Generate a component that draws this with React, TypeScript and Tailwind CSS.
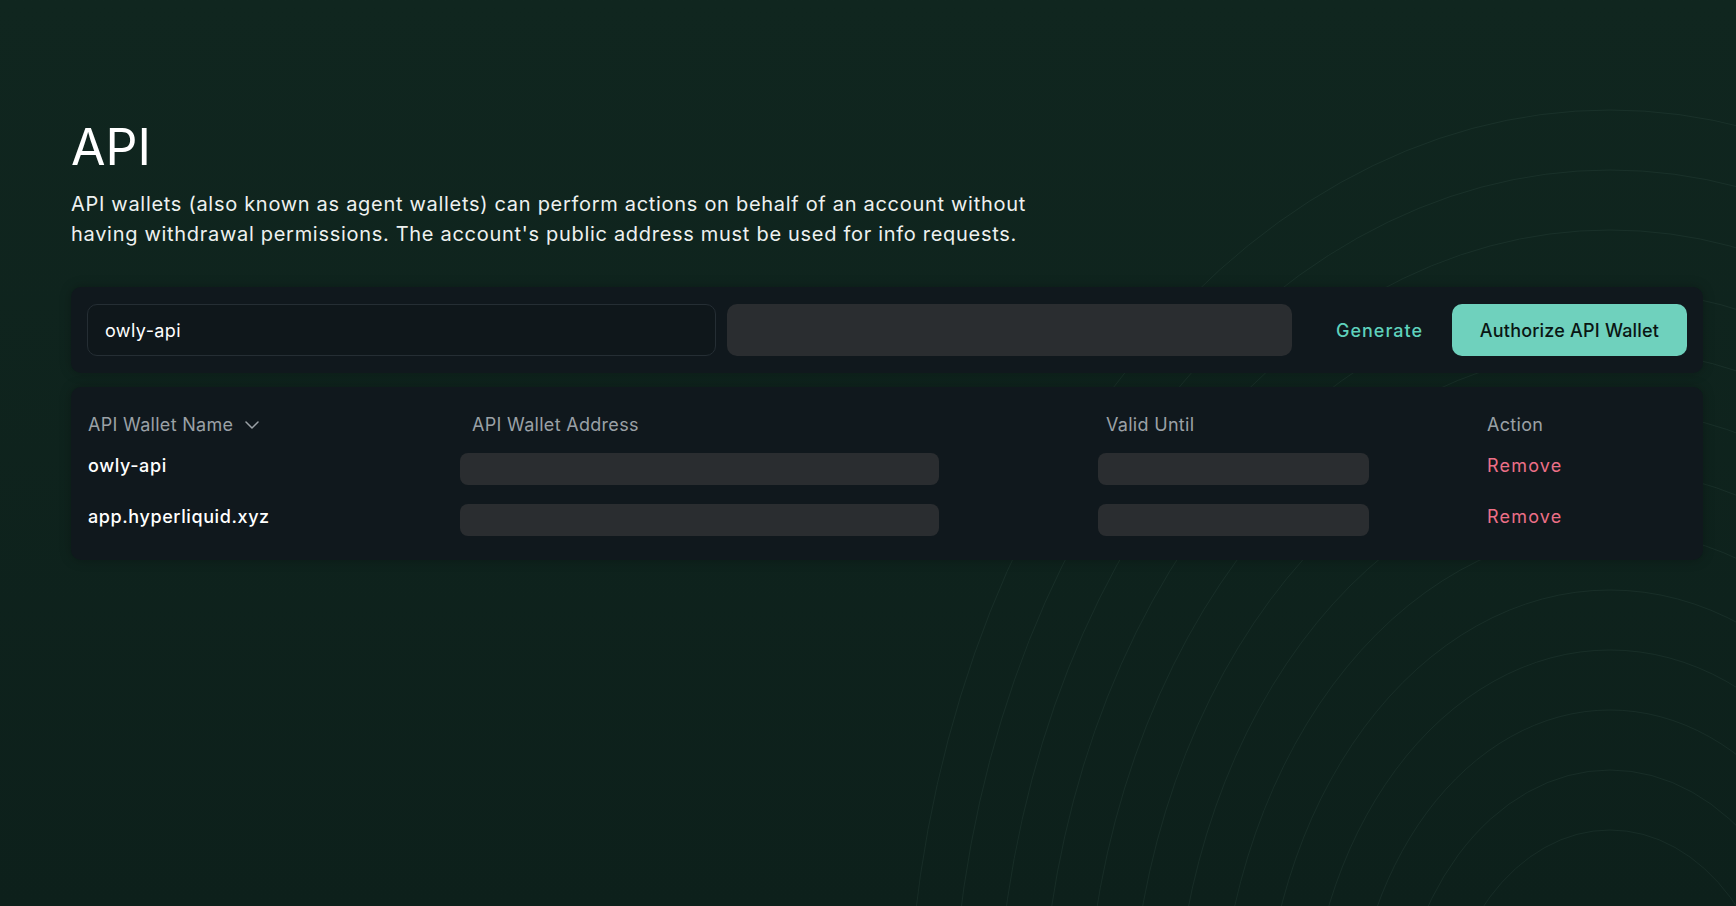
import React from "react";

const arcs = Array.from({ length: 13 }, (_, i) => 230 + i * 60);

function Background() {
  return (
    <svg
      className="pointer-events-none absolute inset-0 h-full w-full"
      viewBox="0 0 1736 906"
      preserveAspectRatio="none"
    >
      {arcs.map((ry) => (
        <ellipse
          key={ry}
          cx={1610}
          cy={1060}
          rx={ry * 0.74}
          ry={ry}
          fill="none"
          stroke="rgba(190,230,215,0.06)"
          strokeWidth={1}
        />
      ))}
    </svg>
  );
}

function Chevron() {
  return (
    <svg width="14" height="8" viewBox="0 0 14 8" className="ml-[12px] mt-[2px]">
      <polyline points="1,1 7,7 13,1" fill="none" stroke="#9ba1a6" strokeWidth="1.5" strokeLinecap="round" strokeLinejoin="round" />
    </svg>
  );
}

const rows = ["owly-api", "app.hyperliquid.xyz"];

export default function App() {
  return (
    <div
      className="relative min-h-screen w-full overflow-hidden bg-gradient-to-b from-[#10261f] to-[#0d201b] text-white"
      style={{ fontFamily: "Inter, 'Noto Sans', sans-serif", height: 906 }}
    >
      <Background />
      <div className="relative z-10 ml-[71px] w-[1632px] pt-[117px]">
        <h1 className="text-[50px] leading-[60px] font-normal text-white">API</h1>
        <p className="mt-[12px] text-[20px] leading-[30px] tracking-[0.7px] text-[#eef1f0]">
          API wallets (also known as agent wallets) can perform actions on behalf of an account without
          <br />
          having withdrawal permissions. The account's public address must be used for info requests.
        </p>

        <div className="mt-[38px] flex items-center rounded-[10px] bg-[#10181d] px-4 py-[17px] shadow-[0_0_12px_rgba(0,0,0,0.25)]">
          <div className="flex h-[52px] w-[629px] items-center rounded-[10px] border border-[#252e34] bg-[#0f171b] px-[17px] text-[18px] tracking-[0.4px] text-white">
            owly-api
          </div>
          <div className="ml-[11px] h-[52px] w-[565px] rounded-[10px] bg-[#2a2d30]" />
          <div className="ml-[44px] text-[18px] font-medium tracking-[1px] text-[#5fd1bc]">Generate</div>
          <button className="ml-auto flex h-[52px] w-[235px] items-center justify-center rounded-[10px] bg-[#6fd1bd] text-[18px] font-medium tracking-[0.2px] text-[#0a1613]">
            Authorize API Wallet
          </button>
        </div>

        <div className="mt-[14px] rounded-[10px] bg-[#10181d] px-4 pb-[15px] pt-[23px] shadow-[0_0_12px_rgba(0,0,0,0.25)]">
          <div className="grid h-7 grid-cols-[373px_638px_389px_1fr] items-center text-[18px] tracking-[0.3px] text-[#9ba1a6]">
            <div className="flex items-center pl-px">
              API Wallet Name
              <Chevron />
            </div>
            <div className="pl-3">API Wallet Address</div>
            <div className="pl-2">Valid Until</div>
            <div>Action</div>
          </div>
          <div className="mt-[5px]">
            {rows.map((name) => (
              <div key={name} className="grid h-[51px] grid-cols-[373px_638px_389px_1fr] items-center text-[18px]">
                <div className="pb-[6px] pl-px font-medium tracking-[0.6px] text-white">{name}</div>
                <div>
                  <div className="h-8 w-[479px] rounded-lg bg-[#2a2d30]" />
                </div>
                <div>
                  <div className="h-8 w-[271px] rounded-lg bg-[#2a2d30]" />
                </div>
                <div className="pb-[6px] tracking-[1.2px] text-[#ec6f87]">Remove</div>
              </div>
            ))}
          </div>
        </div>
      </div>
    </div>
  );
}
